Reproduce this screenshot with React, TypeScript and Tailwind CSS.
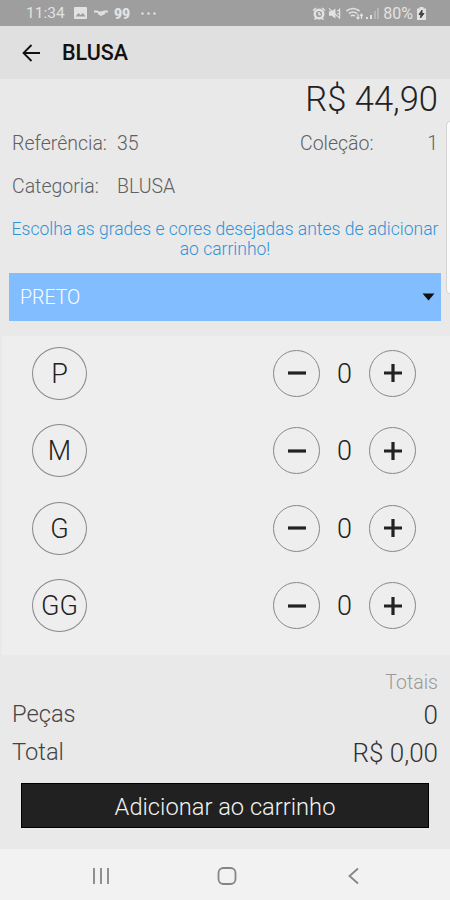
import { useState } from "react"

const SIZES = ["P", "M", "G", "GG"]

/** Product detail screen: pick quantities per size, then add to cart. */
export default function App() {
  const [qty, setQty] = useState<Record<string, number>>({})

  function change(size: string, delta: number) {
    setQty((prev) => ({ ...prev, [size]: Math.max(0, (prev[size] ?? 0) + delta) }))
  }

  const pieces = Object.values(qty).reduce((sum, n) => sum + n, 0)
  const total = (pieces * 44.9).toFixed(2).replace(".", ",")

  return (
    <div className="relative flex h-[900px] w-[450px] flex-col overflow-hidden bg-[#e9e9e9] font-[Roboto,sans-serif] font-light text-[#222]">
      <StatusBar />

      <header className="flex h-[53px] shrink-0 items-center bg-[#e0e0e0] pl-[22px]">
        <button aria-label="Voltar">
          <svg width="19" height="18" viewBox="0 0 19 18" fill="none" stroke="#111" strokeWidth="1.8">
            <path d="M18 9H2M9.500 1L1.500 9l8 8" />
          </svg>
        </button>
        <h1 className="ml-[21px] text-[21.5px] leading-none font-medium text-[#111]">BLUSA</h1>
      </header>

      <div className="h-[41px] shrink-0 pr-3 text-right text-[34.5px] leading-[41px]">R$ 44,90</div>

      <div className="mt-[12px] flex h-6 shrink-0 items-center pr-3 pl-3 text-[19.5px] text-[#606060]">
        <span className="w-[105px]">Referência:</span>
        <span>35</span>
        <span className="ml-auto w-[116px]">Coleção:</span>
        <span className="w-[22px] text-right">1</span>
      </div>
      <div className="mt-[19px] flex h-6 shrink-0 items-center pl-3 text-[19.5px] text-[#606060]">
        <span className="w-[105px]">Categoria:</span>
        <span>BLUSA</span>
      </div>

      <p className="mt-[20px] h-10 shrink-0 text-center text-[17.5px] leading-5 whitespace-nowrap text-[#2f93d8]">
        Escolha as grades e cores desejadas antes de adicionar
        <br />
        ao carrinho!
      </p>

      <button className="mx-[9px] mt-[14px] flex h-[48px] shrink-0 items-center justify-between bg-[#82bdff] pr-[6px] pl-[11px] text-[19.5px] text-white">
        <span className="pt-[2px]">PRETO</span>
        <svg width="13" height="8" viewBox="0 0 13 8">
          <path d="M0.500 0.500h12l-6 7z" fill="#111" />
        </svg>
      </button>

      <section className="mt-[15px] ml-[2px] flex h-[319px] shrink-0 flex-col gap-6 bg-[#eeeeee] pt-[10.5px] pl-[30px] pr-[34px]">
        {SIZES.map((size) => (
          <div key={size} className="flex h-[53.5px] items-center">
            <span className="flex h-[53px] w-[55px] items-center justify-center rounded-[50%] border border-[#888] pt-px text-[27px]">
              {size}
            </span>
            <RoundButton label="Menos" className="ml-auto" onClick={() => change(size, -1)}>
              <path d="M0 9h18" />
            </RoundButton>
            <span className="w-[49px] pt-px text-center text-[27px]">{qty[size] ?? 0}</span>
            <RoundButton label="Mais" onClick={() => change(size, 1)}>
              <path d="M0 9h18M9 0v18" />
            </RoundButton>
          </div>
        ))}
      </section>

      <div className="mt-[15px] h-6 shrink-0 pt-px pr-3 text-right text-[19.5px] leading-6 text-[#999]">Totais</div>
      <SummaryRow label="Peças" value={String(pieces)} />
      <SummaryRow label="Total" value={`R$ ${total}`} />

      <button className="mx-[21px] mt-[13px] h-[45px] shrink-0 border border-black bg-[#212121] pt-[5px] text-[23.7px] leading-none text-[#f2f2f2]">
        Adicionar ao carrinho
      </button>

      <nav className="mt-auto flex h-[51px] shrink-0 items-center bg-[#f2f2f2] pt-[2px] pl-[92px] text-[#858585]">
        <svg width="18" height="18" viewBox="0 0 18 18" stroke="currentColor" strokeWidth="1.8">
          <path d="M2 1v16M9 1v16M16 1v16" />
        </svg>
        <svg className="ml-[107px]" width="20" height="18" viewBox="0 0 20 18" fill="none" stroke="currentColor" strokeWidth="1.8">
          <rect x="1.500" y="1" width="17" height="16" rx="5" />
        </svg>
        <svg className="ml-[111px]" width="12" height="18" viewBox="0 0 12 18" fill="none" stroke="currentColor" strokeWidth="1.8">
          <path d="M10 1.500L1.500 9l8.500 7.500" />
        </svg>
      </nav>

      {/* edge panel handle */}
      <div className="absolute top-[121px] right-[-6px] h-[173px] w-[10px] rounded-l border border-[#d4d4d4] bg-[#fcfcfc]" />
    </div>
  )
}

function RoundButton({
  label,
  className,
  onClick,
  children,
}: {
  label: string
  className?: string
  onClick: () => void
  children: React.ReactNode
}) {
  return (
    <button aria-label={label} onClick={onClick} className={className}>
      <span className="flex size-[47px] items-center justify-center rounded-full border border-[#888]">
        <svg width="18" height="18" viewBox="0 0 18 18" stroke="#222" strokeWidth="3.200">
          {children}
        </svg>
      </span>
    </button>
  )
}

function SummaryRow({ label, value }: { label: string; value: string }) {
  return (
    <div className="flex h-[38px] shrink-0 items-center justify-between pr-3 pl-3">
      <span className="pt-[3px] text-[23.7px] text-[#444]">{label}</span>
      <span className="pt-[4px] text-[26px] text-[#333]">{value}</span>
    </div>
  )
}

/** Phone status bar with clock, notifications and signal icons. */
function StatusBar() {
  return (
    <div className="flex h-[26px] shrink-0 items-center bg-[#9e9e9e] pl-[26px] text-[15.5px] leading-none font-normal text-[#e2e2e2]">
      <span className="w-[48px] pt-[2px]">11:34</span>
      <svg width="13" height="12" viewBox="0 0 13 12">
        <rect width="13" height="12" rx="1" fill="currentColor" />
        <path d="M1.500 9.500l3-3.500 2 2 2.500-2 2.500 3.500z" fill="#9e9e9e" />
      </svg>
      <svg className="ml-[7px]" width="14" height="7" viewBox="0 0 14 7" fill="none" stroke="currentColor" strokeWidth="1.800">
        <path d="M0 1.500h3l2 1h3l2-1h4M4 3l3 2 4-2" />
      </svg>
      <span className="ml-[6px] pt-[2px] text-[14px] font-black">99</span>
      <svg className="ml-[11px]" width="15" height="3" viewBox="0 0 15 3" fill="currentColor">
        <circle cx="1.500" cy="1.500" r="1.200" />
        <circle cx="7.500" cy="1.500" r="1.200" />
        <circle cx="13.500" cy="1.500" r="1.200" />
      </svg>
      <div className="ml-auto flex items-center pr-[24px]">
        <svg width="14" height="13" viewBox="0 0 14 13" fill="none" stroke="currentColor" strokeWidth="2.400">
          <circle cx="7" cy="7" r="4.300" />
          <path d="M1 3.500l3-2.500M13 3.500l-3-2.500M2.500 12.500l2-2M11.500 12.500l-2-2M7 5v2.500h2" strokeWidth="1.600" />
        </svg>
        <svg className="ml-[2px]" width="13" height="13" viewBox="0 0 14 13" fill="currentColor">
          <path d="M1 4h3l4-3v11l-4-3H1z" />
          <path d="M1 1l12 11M10 4l3-2M10 7h3M12.500 1v11" stroke="currentColor" strokeWidth="1.300" />
        </svg>
        <svg className="ml-[5px]" width="17" height="13" viewBox="0 0 17 13" fill="none" stroke="currentColor">
          <path d="M0.500 4q6.500-5 13 0M3 6.500q4-3 8 0M5 9q2-1.500 4 0" strokeWidth="1.700" />
          <path d="M12 7v4.500M10.500 10l1.500 2 1.500-2M15.500 12V7.500M14 9l1.500-2 1.500 2" strokeWidth="1.200" />
        </svg>
        <svg className="ml-[3px]" width="13" height="13" viewBox="0 0 13 13" fill="currentColor">
          <path d="M0 10h2v2H0zM4 8h2v4H4z" />
          <path d="M8 4h2v8H8zM11 1h2v11h-2z" opacity="0.350" />
        </svg>
        <span className="ml-[4px] pt-[2px] text-[16px]">80%</span>
        <svg className="ml-[4px]" width="9" height="13" viewBox="0 0 9 13">
          <path d="M2.500 0h4v1.500H9V13H0V1.500h2.500z" fill="currentColor" />
          <path d="M5 3L2 7.500h2L3.500 11 7 6.500H5z" fill="#444" stroke="#444" />
        </svg>
      </div>
    </div>
  )
}
